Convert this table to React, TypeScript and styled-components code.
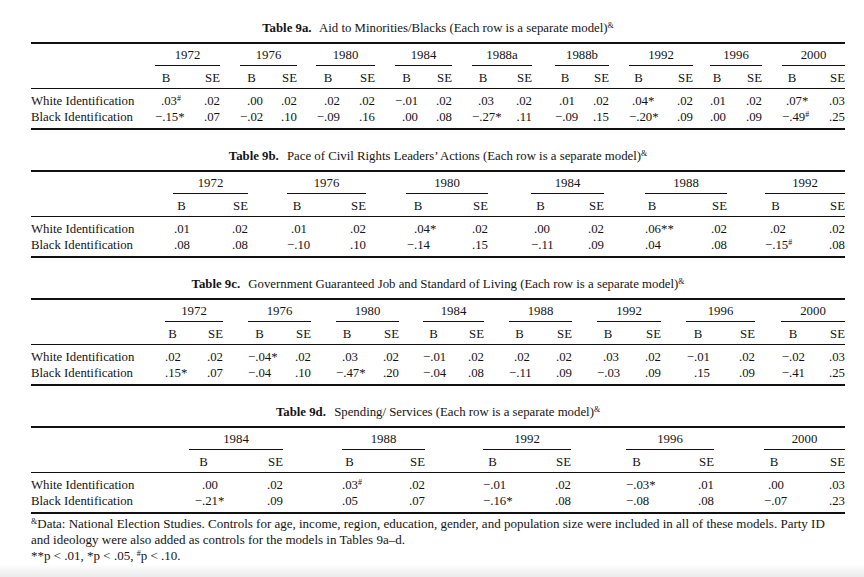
import { Fragment } from "react";
import styled, { createGlobalStyle } from "styled-components";

const GlobalStyle = createGlobalStyle`
  html, body {
    margin: 0;
    padding: 0;
    background: #fff;
    overflow: hidden;
  }
  body {
    font-family: "Liberation Serif", "Times New Roman", serif;
    font-size: 12.8px;
    color: #141414;
  }
`

type Group = { year: string; start: number; bEnd: number; end: number }

type TableData = {
    label: string
    title: string
    groups: Group[]
    white: string[]
    black: string[]
}

const LEFT = 31
const LABEL_W = 120

const tables: TableData[] = [
    {
        label: "Table 9a.",
        title: "Aid to Minorities/Blacks (Each row is a separate model)",
        groups: [
            { year: "1972", start: 155, bEnd: 177, end: 220 },
            { year: "1976", start: 240, bEnd: 263, end: 297 },
            { year: "1980", start: 316, bEnd: 340, end: 375 },
            { year: "1984", start: 395, bEnd: 418, end: 452 },
            { year: "1988a", start: 472, bEnd: 494, end: 532 },
            { year: "1988b", start: 555, bEnd: 575, end: 609 },
            { year: "1992", start: 629, bEnd: 648, end: 693 },
            { year: "1996", start: 710, bEnd: 724, end: 762 },
            { year: "2000", start: 782, bEnd: 802, end: 845 },
        ],
        white: [".03#", ".02", ".00", ".02", ".02", ".02", "−.01", ".02", ".03", ".02", ".01", ".02", ".04*", ".02", ".01", ".02", ".07*", ".03"],
        black: ["−.15*", ".07", "−.02", ".10", "−.09", ".16", ".00", ".08", "−.27*", ".11", "−.09", ".15", "−.20*", ".09", ".00", ".09", "−.49#", ".25"],
    },
    {
        label: "Table 9b.",
        title: "Pace of Civil Rights Leaders’ Actions (Each row is a separate model)",
        groups: [
            { year: "1972", start: 173, bEnd: 190, end: 248 },
            { year: "1976", start: 287, bEnd: 307, end: 366 },
            { year: "1980", start: 406, bEnd: 430, end: 488 },
            { year: "1984", start: 531, bEnd: 550, end: 604 },
            { year: "1988", start: 645, bEnd: 659, end: 727 },
            { year: "1992", start: 765, bEnd: 786, end: 845 },
        ],
        white: [".01", ".02", ".01", ".02", ".04*", ".02", ".00", ".02", ".06**", ".02", ".02", ".02"],
        black: [".08", ".08", "−.10", ".10", "−.14", ".15", "−.11", ".09", ".04", ".08", "−.15#", ".08"],
    },
    {
        label: "Table 9c.",
        title: "Government Guaranteed Job and Standard of Living (Each row is a separate model)",
        groups: [
            { year: "1972", start: 165, bEnd: 180, end: 223 },
            { year: "1976", start: 248, bEnd: 271, end: 311 },
            { year: "1980", start: 336, bEnd: 358, end: 399 },
            { year: "1984", start: 423, bEnd: 444, end: 484 },
            { year: "1988", start: 509, bEnd: 530, end: 572 },
            { year: "1992", start: 597, bEnd: 619, end: 661 },
            { year: "1996", start: 686, bEnd: 710, end: 755 },
            { year: "2000", start: 781, bEnd: 805, end: 845 },
        ],
        white: [".02", ".02", "−.04*", ".02", ".03", ".02", "−.01", ".02", ".02", ".02", ".03", ".02", "−.01", ".02", "−.02", ".03"],
        black: [".15*", ".07", "−.04", ".10", "−.47*", ".20", "−.04", ".08", "−.11", ".09", "−.03", ".09", ".15", ".09", "−.41", ".25"],
    },
    {
        label: "Table 9d.",
        title: "Spending/ Services (Each row is a separate model)",
        groups: [
            { year: "1984", start: 189, bEnd: 218, end: 283 },
            { year: "1988", start: 342, bEnd: 357, end: 425 },
            { year: "1992", start: 483, bEnd: 502, end: 571 },
            { year: "1996", start: 626, bEnd: 647, end: 714 },
            { year: "2000", start: 764, bEnd: 784, end: 845 },
        ],
        white: [".00", ".02", ".03#", ".02", "−.01", ".02", "−.03*", ".01", ".00", ".03"],
        black: ["−.21*", ".09", ".05", ".07", "−.16*", ".08", "−.08", ".08", "−.07", ".23"],
    },
]

const Page = styled.div`
    width: 814px;
    padding: 20px 0 0 ${LEFT}px;
`

const Block = styled.section`
    & + & {
        margin-top: 18px;
    }
`

const Title = styled.div`
    text-align: center;
    line-height: 16px;
    margin-bottom: 6px;
    white-space: nowrap;
`

const TitleLabel = styled.span`
    font-weight: bold;
    margin-right: 5px;
`

const Sup = styled.sup`
    font-size: 0.62em;
    line-height: 0;
    vertical-align: 0.5em;
`

const Table = styled.div`
    border-top: 2px solid #111;
    border-bottom: 2px solid #111;
`

const Row = styled.div<{ $cols: string }>`
    display: grid;
    grid-template-columns: ${p => p.$cols};
    line-height: 16px;
    white-space: nowrap;
`

const YearRow = styled(Row)`
    padding-top: 3px;
`

const SubRow = styled(Row)`
    padding: 4px 0 2px;
    border-bottom: 1px solid #111;
`

const Body = styled.div`
    padding: 4px 0 3px;
`

const Year = styled.div`
    grid-column: span 2;
    text-align: center;
    padding-bottom: 2px;
    border-bottom: 1px solid #111;
`

const Cell = styled.div<{ $align?: "left" | "center" | "right" }>`
    text-align: ${p => p.$align ?? "right"};
`

const Mark = styled.span`
    display: inline-block;
    width: 0;
    text-align: left;
    white-space: nowrap;
`

const Notes = styled.div`
    margin-top: 2px;
    font-size: 13px;
    line-height: 16px;
    white-space: nowrap;
`

const Shade = styled.div`
    height: 14px;
    background: linear-gradient(to bottom, #ffffff, #e9e9e9);
`

const columnsOf = (groups: Group[]) => {
    let prev = LEFT + LABEL_W
    const parts = [`${LABEL_W}px`]
    groups.forEach(g => {
        parts.push(`${g.start - prev}px`, `${g.bEnd - g.start}px`, `${g.end - g.bEnd}px`)
        prev = g.end
    })
    return parts.join(" ")
}

const Value = ({ v }: { v: string }) => {
    const m = v.match(/^([−\d.]+)(.*)$/)
    const num = m ? m[1] : v
    const mark = m ? m[2] : ""
    return (
        <>
            {num}
            <Mark>{mark === "#" ? <Sup>#</Sup> : mark}</Mark>
        </>
    )
}

const DataRow = ({ cols, label, values }: { cols: string; label: string; values: string[] }) => (
    <Row $cols={cols}>
        <Cell $align="left">{label}</Cell>
        {values.map((v, i) => (
            <Fragment key={i}>
                {i % 2 === 0 && <div />}
                <Cell>{i % 2 === 0 ? <Value v={v} /> : v}</Cell>
            </Fragment>
        ))}
    </Row>
)

const ModelTable = ({ t }: { t: TableData }) => {
    const cols = columnsOf(t.groups)
    return (
        <Block>
            <Title>
                <TitleLabel>{t.label}</TitleLabel> {t.title}<Sup>&amp;</Sup>
            </Title>
            <Table>
                <YearRow $cols={cols}>
                    <div />
                    {t.groups.map(g => (
                        <Fragment key={g.year}>
                            <div />
                            <Year>{g.year}</Year>
                        </Fragment>
                    ))}
                </YearRow>
                <SubRow $cols={cols}>
                    <div />
                    {t.groups.map(g => (
                        <Fragment key={g.year}>
                            <div />
                            <Cell $align="center">B</Cell>
                            <Cell>SE</Cell>
                        </Fragment>
                    ))}
                </SubRow>
                <Body>
                    <DataRow cols={cols} label="White Identification" values={t.white} />
                    <DataRow cols={cols} label="Black Identification" values={t.black} />
                </Body>
            </Table>
        </Block>
    )
}

export default function App() {
    return (
        <>
            <GlobalStyle />
            <Page>
                {tables.map(t => (
                    <ModelTable key={t.label} t={t} />
                ))}
                <Notes>
                    <Sup>&amp;</Sup>Data: National Election Studies. Controls for age, income, region, education, gender, and population size were included in all of these models. Party ID
                    <br />
                    and ideology were also added as controls for the models in Tables 9a–d.
                    <br />
                    **p &lt; .01, *p &lt; .05, <Sup>#</Sup>p &lt; .10.
                </Notes>
            </Page>
            <Shade />
        </>
    )
}
